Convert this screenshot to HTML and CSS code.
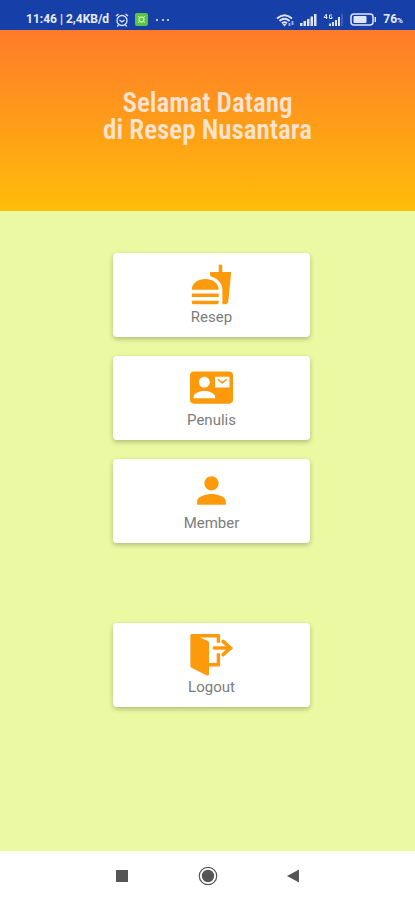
FILE: index.html
```html
<!DOCTYPE html>
<html lang="id">
<head>
    <meta charset="UTF-8">
    <meta name="viewport" content="width=device-width, initial-scale=1.0">
    <title>Resep Nusantara</title>
    <link rel="stylesheet" href="styles.css">
</head>
<body>
    <div class="status-bar">
        <div class="status-left">
            <span>11:46 | 2,4KB/d</span>
            <svg width="14" height="14" viewBox="0 0 14 14" fill="none" stroke="#dfe6fa" stroke-width="1.300">
                <circle cx="7" cy="7.500" r="5"/>
                <path d="M1 3l2.500-2M13 3l-2.500-2M4.500 7l2.500 2 2.500-2M3.500 12l-1.200 1.500M10.500 12l1.200 1.500"/>
            </svg>
            <svg width="13" height="13" viewBox="0 0 13 13">
                <rect width="13" height="13" rx="2" fill="#5ac445"/>
                <circle cx="6.500" cy="6.500" r="2.500" fill="none" stroke="#b5ee9c" stroke-width="1.500"/>
                <path d="M3 3l1.500 1.500M10 3l-1.500 1.500M3 10l1.500-1.500M10 10l-1.500-1.500" stroke="#b5ee9c"/>
            </svg>
            <svg width="18" height="4" viewBox="0 0 18 4" fill="#dfe6fa">
                <circle cx="3" cy="2" r="1.100"/><circle cx="9" cy="2" r="1.100"/><circle cx="14" cy="2" r="1.100"/>
            </svg>
        </div>
        <div class="status-right">
            <svg width="18" height="14" viewBox="0 0 18 14" fill="none" stroke="#dfe6fa" stroke-width="1.900">
                <path d="M1 5.500q7.500-6.500 15 0M3.500 8q5-4.300 10 0M6 10.300q2.500-2 5 0"/>
                <path d="M8.500 13.500l-2-2.500h4z" fill="#dfe6fa" stroke="none"/>
                <path d="M13.500 13v-3M16.500 8v4" stroke="#9db0e8"/>
            </svg>
            <svg width="17" height="13" viewBox="0 0 17 13" fill="#dfe6fa">
                <path d="M0 10h2.500v3H0zM3.500 8H6v5H3.500zM7 6h2.500v7H7zM10.500 3.500H13V13h-2.500zM14 1h2.500v12H14z"/>
            </svg>
            <svg width="21" height="14" viewBox="0 0 21 14">
                <path d="M3.500 1L1 4.500h3.500M3.500 1v5M9 2H6.500v3.500H9V4H8" fill="none" stroke="#dfe6fa"/>
                <path d="M6 10.500h2V13H6zM9 9h2v4H9zM12 7h2v6h-2zM15 4h2v9h-2z" fill="#dfe6fa"/>
                <path d="M18 1h2v12h-2z" fill="#3f5db8"/>
            </svg>
            <svg width="27" height="13" viewBox="0 0 27 13">
                <rect x="1" y="1" width="22" height="11" rx="3" fill="none" stroke="#dfe6fa" stroke-width="1.500"/>
                <rect x="3.500" y="3" width="13" height="7" rx="1" fill="#dfe6fa"/>
                <path d="M24.500 4h1.500v5h-1.500z" fill="#dfe6fa"/>
            </svg>
            <span>76<small>%</small></span>
        </div>
    </div>

    <header class="hero">
        <h1>Selamat Datang<br>di Resep Nusantara</h1>
    </header>

    <main class="menu">
        <a class="card" href="#resep">
            <svg viewBox="0 0 24 24">
                <path d="M18.060 22.990h1.660c.84 0 1.530-.64 1.630-1.460L23 5.050h-5V1h-1.970v4.050h-4.970l.3 2.340c1.710.47 3.310 1.320 4.270 2.260 1.440 1.420 2.430 2.890 2.430 5.290v8.050zM1 21.990V21h15.030v.99c0 .55-.45 1-1.010 1H2.010c-.56 0-1.010-.45-1.010-1zm15.030-7c0-8-15.030-8-15.030 0h15.030zM1.020 17h15v2h-15z"/>
            </svg>
            <span>Resep</span>
        </a>
        <a class="card" href="#penulis">
            <svg viewBox="0 0 24 24">
                <path d="M22 3H2C.9 3 0 3.900 0 5v14c0 1.100.9 2 2 2h20c1.100 0 2-.9 2-2V5c0-1.100-.9-2-2-2zM8 6c1.660 0 3 1.340 3 3s-1.340 3-3 3-3-1.340-3-3 1.340-3 3-3zm6 12H2v-1c0-2 4-3.100 6-3.100s6 1.100 6 3.100v1zm8-6h-8V6h8v6z"/>
                <path d="M15.500 7v1l2.500 2 2.500-2V7L18 8.800z"/>
            </svg>
            <span>Penulis</span>
        </a>
        <a class="card" href="#member">
            <svg viewBox="0 0 24 24">
                <path d="M12 12c2.210 0 4-1.790 4-4s-1.790-4-4-4-4 1.790-4 4 1.790 4 4 4zm0 2c-2.670 0-8 1.340-8 4v2h16v-2c0-2.660-5.330-4-8-4z"/>
            </svg>
            <span>Member</span>
        </a>
        <a class="card card-logout" href="#logout">
            <svg viewBox="0 0 24 24">
                <path d="M1.100.6h14.900c.5 0 .8.300.8.800v4.100h-1.900V2.500H5.500L9.700 4.300c.6.250.9.6.9 1.300v11.200h4.300v-5.500h1.900v6.500c0 .6-.3.900-.9.900h-5.300v4c0 1-.6 1.300-1.400.9L1.100 19.600c-.6-.3-.9-.7-.9-1.300V1.500c0-.6.300-.9.900-.9z"/>
                <path class="arrow" d="M13.600 8.400h8.500M18.500 4.700l4.100 3.700-4.100 3.700"/>
            </svg>
            <span>Logout</span>
        </a>
    </main>

    <nav class="nav-bar">
        <button type="button" aria-label="Aplikasi terbaru">
            <svg width="20" height="20" viewBox="0 0 20 20"><path d="M4 4h12v12H4z"/></svg>
        </button>
        <button type="button" aria-label="Beranda">
            <svg width="20" height="20" viewBox="0 0 20 20">
                <circle cx="10" cy="10" r="8.700" fill="none" stroke="#555" stroke-width="1.200"/>
                <circle cx="10" cy="10" r="6.200"/>
            </svg>
        </button>
        <button type="button" aria-label="Kembali">
            <svg width="20" height="20" viewBox="0 0 20 20"><path d="M3 10l12-6.500v13z"/></svg>
        </button>
    </nav>
</body>
</html>
```
FILE: styles.css
```css
* {
    box-sizing: border-box;
}
body {
    margin: 0;
    min-height: 100vh;
    display: flex;
    flex-direction: column;
    font-family: Roboto, "Liberation Sans", sans-serif;
    background-color: #ebf9a2;
}
.status-bar {
    display: flex;
    justify-content: space-between;
    height: 30px;
    padding: 9px 12px 0 26px;
    background-color: #173fa8;
    color: #e8edfc;
    font-size: 12px;
    font-weight: 700;
    line-height: 21px;
}
.status-left, .status-right {
    display: flex;
    align-items: center;
    gap: 6px;
}
.status-right small {
    font-size: 8px;
}
.hero {
    height: 181px;
    padding-top: 60px;
    background: linear-gradient(#ff7b2b, #ffbd08);
}
.hero h1 {
    margin: 0;
    color: #fbe3d0;
    font-family: "Roboto Condensed", "Liberation Sans Narrow", Roboto, sans-serif;
    font-size: 27px;
    font-weight: 600;
    line-height: 27px;
    text-align: center;
}
.menu {
    flex: 1;
    display: flex;
    flex-direction: column;
    align-items: center;
    gap: 19px;
    padding: 42px 0 42px 8px;
}
.card {
    display: flex;
    flex-direction: column;
    align-items: center;
    width: 197px;
    height: 84px;
    padding-top: 10px;
    border-radius: 4px;
    background-color: #fff;
    box-shadow: 0 2px 5px rgba(0, 0, 0, 0.25);
    color: #7c7c7c;
    font-size: 15px;
    line-height: 22px;
    text-decoration: none;
}
.card svg {
    width: 43px;
    height: 43px;
    fill: #fd9a0b;
}
.card .arrow {
    fill: none;
    stroke: #fd9a0b;
    stroke-width: 2;
    stroke-linecap: round;
}
.card-logout {
    margin-top: 61px;
}
.nav-bar {
    display: flex;
    justify-content: center;
    align-items: center;
    gap: 66px;
    height: 49px;
    background-color: #fff;
}
.nav-bar button {
    padding: 0;
    border: none;
    background: none;
    cursor: pointer;
}
.nav-bar svg {
    display: block;
    fill: #555;
}
```
